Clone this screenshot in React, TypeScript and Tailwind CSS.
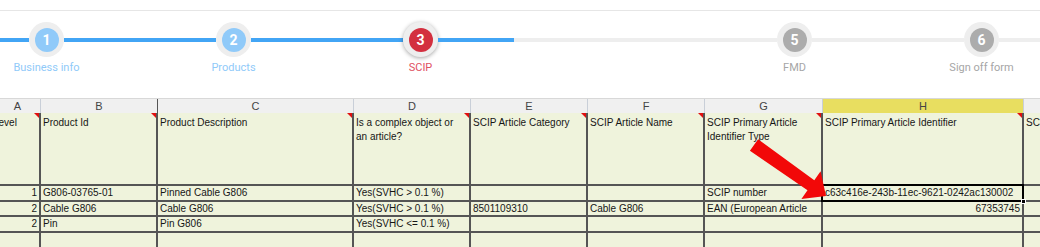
import React from "react";

type StepState = "done" | "active" | "todo" | "hidden";
interface Step {
  n: string;
  label: string;
  state: StepState;
  left: string;
  right: string;
}

const BLUE = "bg-[#42a5f5]";
const GRAY = "bg-[#eeeeee]";

const steps: Step[] = [
  { n: "1", label: "Business info", state: "done", left: BLUE, right: BLUE },
  { n: "2", label: "Products", state: "done", left: BLUE, right: BLUE },
  { n: "3", label: "SCIP", state: "active", left: BLUE, right: BLUE },
  { n: "4", label: "", state: "hidden", left: GRAY, right: GRAY },
  { n: "5", label: "FMD", state: "todo", left: GRAY, right: GRAY },
  { n: "6", label: "Sign off form", state: "todo", left: GRAY, right: GRAY },
];

function StepItem({ s }: { s: Step }) {
  const inner =
    s.state === "done"
      ? "bg-[#90caf9]"
      : s.state === "active"
      ? "bg-[#d32f3f]"
      : "bg-[#acacac]";
  const labelColor =
    s.state === "done"
      ? "text-[#90caf9]"
      : s.state === "active"
      ? "text-[#e0505f]"
      : "text-[#a6a6a6]";
  const ring =
    s.state === "active"
      ? "shadow-[0_1px_4px_rgba(0,0,0,0.35)]"
      : "";
  return (
    <div className="w-[187px] shrink-0 flex flex-col items-center">
      <div className="w-full h-[35px] flex items-center">
        <div className={`flex-1 h-[4px] ${s.left}`} />
        {s.state !== "hidden" && (
          <div
            className={`w-[35px] h-[35px] rounded-full bg-[#eeeeee] flex items-center justify-center ${ring}`}
          >
            <div
              className={`w-[24px] h-[24px] rounded-full ${inner} flex items-center justify-center text-white font-bold text-[14px] leading-none`}
            >
              {s.n}
            </div>
          </div>
        )}
        <div className={`flex-1 h-[4px] ${s.right}`} />
      </div>
      <div className={`mt-[4px] text-[11px] leading-[13px] ${labelColor}`}>
        {s.label}
      </div>
    </div>
  );
}

interface Col {
  w: string;
  letter: string;
  hdr: string;
  sep: string;
}

const cols: Col[] = [
  { w: "w-[46px] -ml-[5px]", letter: "A", hdr: "bg-[#f0f0f0]", sep: "border-[#c9cfd8]" },
  { w: "w-[117px]", letter: "B", hdr: "bg-[#f0f0f0]", sep: "border-[#555555]" },
  { w: "w-[196px]", letter: "C", hdr: "bg-[#f0f0f0]", sep: "border-[#c9cfd8]" },
  { w: "w-[117px]", letter: "D", hdr: "bg-[#f0f0f0]", sep: "border-[#c9cfd8]" },
  { w: "w-[117px]", letter: "E", hdr: "bg-[#f0f0f0]", sep: "border-[#c9cfd8]" },
  { w: "w-[117px]", letter: "F", hdr: "bg-[#f0f0f0]", sep: "border-[#c9cfd8]" },
  { w: "w-[118px]", letter: "G", hdr: "bg-[#f0f0f0]", sep: "border-[#c9cfd8]" },
  { w: "w-[201px]", letter: "H", hdr: "bg-[#e8de60]", sep: "border-[#c9cfd8]" },
  { w: "w-[100px]", letter: "I", hdr: "bg-[#f0f0f0]", sep: "border-[#c9cfd8]" },
];

type Cell = { t: React.ReactNode; right?: boolean; sel?: boolean };

const headerCells: React.ReactNode[] = [
  <span className="-ml-[4px]">Level</span>,
  "Product Id",
  "Product Description",
  <>
    Is a complex object or
    <br />
    an article?
  </>,
  "SCIP Article Category",
  "SCIP Article Name",
  <>
    SCIP Primary Article
    <br />
    Identifier Type
  </>,
  "SCIP Primary Article Identifier",
  "SCIP Primary Article Identifier",
];

const dataRows: { h: string; lead: string; cells: Cell[] }[] = [
  {
    h: "h-[16px]",
    lead: "leading-[14px]",
    cells: [
      { t: "1", right: true },
      { t: "G806-03765-01" },
      { t: "Pinned Cable G806" },
      { t: "Yes(SVHC > 0.1 %)" },
      { t: "" },
      { t: "" },
      { t: "SCIP number" },
      { t: "c63c416e-243b-11ec-9621-0242ac130002", sel: true },
      { t: "" },
    ],
  },
  {
    h: "h-[15px]",
    lead: "leading-[13px]",
    cells: [
      { t: "2", right: true },
      { t: "Cable G806" },
      { t: "Cable G806" },
      { t: "Yes(SVHC > 0.1 %)" },
      { t: "8501109310" },
      { t: "Cable G806" },
      { t: "EAN (European Article" },
      { t: "67353745", right: true },
      { t: "" },
    ],
  },
  {
    h: "h-[16px]",
    lead: "leading-[14px]",
    cells: [
      { t: "2", right: true },
      { t: "Pin" },
      { t: "Pin G806" },
      { t: "Yes(SVHC <= 0.1 %)" },
      { t: "" },
      { t: "" },
      { t: "" },
      { t: "" },
      { t: "" },
    ],
  },
  {
    h: "h-[16px]",
    lead: "leading-[14px]",
    cells: cols.map(() => ({ t: "" })),
  },
];

export default function App() {
  return (
    <div className="relative w-[1040px] h-[247px] overflow-hidden bg-white font-['Roboto',sans-serif]">
      <div className="h-[11px] border-b border-[#e6e6e6]" />
      <div className="h-[87px] pt-[11px] overflow-hidden">
        <div className="flex -ml-[47px]">
          {steps.map((s) => (
            <StepItem key={s.n} s={s} />
          ))}
        </div>
      </div>

      <div className="font-['Liberation_Sans',Arial,sans-serif] text-[10px] text-[#161616]">
        {/* column letters */}
        <div className="flex h-[15px] border-t border-[#d8d8d8]">
          {cols.map((c) => (
            <div
              key={c.letter}
              className={`${c.w} shrink-0 ${c.hdr} border-r ${c.sep} text-center text-[11px] leading-[14px] text-[#444444]`}
            >
              {c.letter}
            </div>
          ))}
        </div>
        <div className="bg-[#eff3dc]">
          {/* header row 1 */}
          <div className="flex h-[73px] border-b-2 border-[#555555]">
            {cols.map((c, i) => (
              <div
                key={c.letter}
                className={`${c.w} shrink-0 relative border-r-2 border-[#555555] overflow-hidden whitespace-nowrap px-[2px] pt-[3px] leading-[14px]`}
              >
                {headerCells[i]}
                <div className="absolute top-0 right-0 w-0 h-0 border-l-[5px] border-l-transparent border-t-[5px] border-t-[#e01010]" />
              </div>
            ))}
          </div>
          {dataRows.map((r, ri) => (
            <div key={ri} className={`flex ${r.h} border-b-2 border-[#555555]`}>
              {cols.map((c, ci) => {
                const cell = r.cells[ci];
                return (
                  <div
                    key={c.letter}
                    className={`${c.w} shrink-0 relative border-r-2 border-[#555555] whitespace-nowrap px-[2px] ${r.lead} ${
                      cell.right ? "text-right" : "text-left"
                    } ${cell.sel ? "" : "overflow-hidden"}`}
                  >
                    {cell.t}
                    {cell.sel && (
                      <div className="absolute -top-[2px] -left-[2px] -right-[2px] -bottom-[2px] border-2 border-black z-10">
                        <div className="absolute -right-[4px] -bottom-[4px] w-[5px] h-[5px] bg-black border border-white" />
                      </div>
                    )}
                  </div>
                );
              })}
            </div>
          ))}
        </div>
      </div>

      <svg
        className="absolute inset-0 pointer-events-none z-20"
        width="1040"
        height="247"
        viewBox="0 0 1040 247"
      >
        <polygon
          points="749.9,150.8 758.1,139.2 814.3,180.3 820.6,171.2 826,196 801.4,199.1 807.5,190.3"
          fill="#f20808"
        />
      </svg>
    </div>
  );
}
